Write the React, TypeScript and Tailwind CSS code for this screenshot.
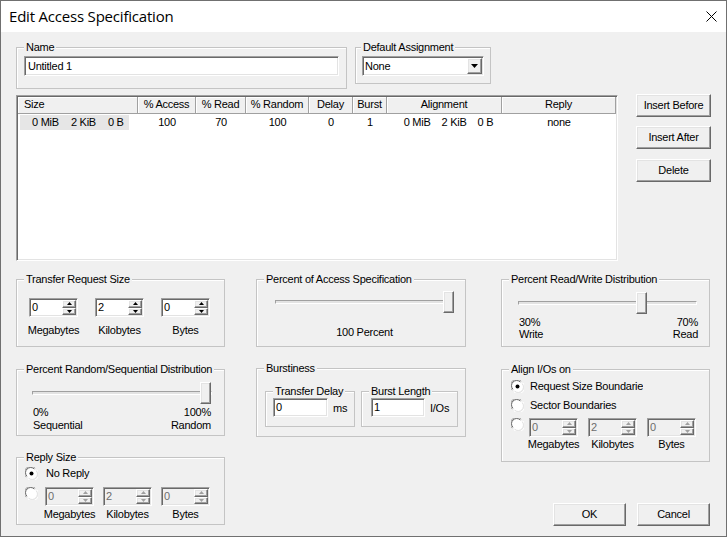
import React from "react";

const sunken =
  "border border-t-[#a0a0a0] border-l-[#a0a0a0] border-b-white border-r-white shadow-[inset_1px_1px_0_#696969,inset_-1px_-1px_0_#e3e3e3]";
const raised =
  "border border-t-white border-l-white border-b-[#696969] border-r-[#696969] shadow-[inset_-1px_-1px_0_#a0a0a0,inset_1px_1px_0_#e3e3e3] bg-[#f0f0f0]";

function Group({
  label,
  className = "",
  labelLeft = "left-[7px]",
  children,
}: {
  label: string;
  className?: string;
  labelLeft?: string;
  children?: React.ReactNode;
}) {
  return (
    <div className={`relative border border-[#c4c4c4] shadow-[inset_1px_1px_0_#fff] ${className}`}>
      <span className={`absolute -top-[7px] ${labelLeft} px-[2px] bg-[#f0f0f0] leading-[13px] whitespace-nowrap`}>
        {label}
      </span>
      {children}
    </div>
  );
}

function Arrow({ up, disabled }: { up?: boolean; disabled?: boolean }) {
  return (
    <div className={`flex-1 flex items-center justify-center ${raised}`}>
      <svg width="5" height="3" viewBox="0 0 5 3">
        <path d={up ? "M2.5 0 L5 3 L0 3 Z" : "M0 0 L5 0 L2.5 3 Z"} fill={disabled ? "#a0a0a0" : "#000"} />
      </svg>
    </div>
  );
}

function Spin({ value, disabled }: { value: string; disabled?: boolean }) {
  return (
    <div className={`flex h-[19px] w-[49px] ${sunken} ${disabled ? "bg-[#f0f0f0]" : "bg-white"}`}>
      <div className={`flex-1 pl-[2px] leading-[17px] ${disabled ? "text-[#6d6d6d]" : ""}`}>{value}</div>
      <div className="flex flex-col w-[16px] p-[1px]">
        <Arrow up disabled={disabled} />
        <Arrow disabled={disabled} />
      </div>
    </div>
  );
}

function LabeledSpin({ value, label, disabled, gap }: { value: string; label: string; disabled?: boolean; gap: string }) {
  return (
    <div className="flex flex-col items-center w-[49px]">
      <Spin value={value} disabled={disabled} />
      <span className={`${gap} leading-[13px] whitespace-nowrap`}>{label}</span>
    </div>
  );
}

function Radio({ checked }: { checked?: boolean }) {
  return (
    <svg width="13" height="13" viewBox="0 0 13 13" className="shrink-0">
      <circle cx="6.5" cy="6.5" r="5.5" fill="#fff" />
      <path d="M1.2 10.2 A6 6 0 0 1 10.2 1.2" stroke="#a0a0a0" strokeWidth="1" fill="none" />
      <path d="M2 9.3 A5 5 0 0 1 9.3 2" stroke="#696969" strokeWidth="1" fill="none" />
      <path d="M11.8 2.8 A6 6 0 0 1 2.8 11.8" stroke="#fff" strokeWidth="1" fill="none" />
      <path d="M11 3.7 A5 5 0 0 1 3.7 11" stroke="#e3e3e3" strokeWidth="1" fill="none" />
      {checked && <circle cx="6.5" cy="6.5" r="2" fill="#000" />}
    </svg>
  );
}

function Slider({ className, thumb }: { className: string; thumb: number }) {
  return (
    <div className={`relative h-[22px] ${className}`}>
      <div className="absolute left-0 right-0 top-[9px] h-[4px] border border-t-[#a0a0a0] border-l-[#a0a0a0] border-b-white border-r-white bg-[#e3e3e3]" />
      <div className={`absolute top-0 h-[22px] w-[11px] ${raised}`} style={{ left: thumb }} />
    </div>
  );
}

function Btn({ children, className = "" }: { children: React.ReactNode; className?: string }) {
  return (
    <div className={`w-[75px] h-[23px] flex items-center justify-center ${raised} ${className}`}>{children}</div>
  );
}

const cols = [
  { name: "Size", w: "w-[120px]", left: true },
  { name: "% Access", w: "w-[58px]" },
  { name: "% Read", w: "w-[50px]" },
  { name: "% Random", w: "w-[63px]" },
  { name: "Delay", w: "w-[44px]" },
  { name: "Burst", w: "w-[34px]" },
  { name: "Alignment", w: "w-[115px]" },
  { name: "Reply", w: "w-[114px]" },
];

export default function App() {
  return (
    <div className="w-[727px] h-[537px] bg-[#f0f0f0] border border-[#707070] flex flex-col overflow-hidden text-black text-[11px] tracking-[-0.25px] font-['Liberation_Sans',Arial,sans-serif]">
      {/* title bar */}
      <div className="h-[31px] shrink-0 bg-white flex items-center justify-between pl-[8px] pr-[9px]">
        <span className="text-[15px] tracking-[-0.2px] font-['Open_Sans',sans-serif]">Edit Access Specification</span>
        <svg width="11" height="11" viewBox="0 0 11 11">
          <path d="M0.5 0.5 L10.5 10.5 M10.5 0.5 L0.5 10.5" stroke="#000" strokeWidth="1" />
        </svg>
      </div>

      <div className="flex-1 pl-[15px]">
        {/* name row */}
        <div className="flex items-start mt-[15px]">
          <Group label="Name" className="w-[331px] h-[42px]">
            <div className="pl-[7px] pt-[8px]">
              <div className={`w-[315px] h-[20px] bg-white pl-[3px] leading-[18px] ${sunken}`}>Untitled 1</div>
            </div>
          </Group>
          <Group label="Default Assignment" labelLeft="left-[5px]" className="w-[136px] h-[37px] ml-[8px]">
            <div className="pl-[6px] pt-[8px]">
              <div className={`w-[122px] h-[20px] bg-white flex ${sunken}`}>
                <span className="flex-1 pl-[2px] leading-[18px]">None</span>
                <div className={`w-[15px] m-[1px] flex items-center justify-center ${raised}`}>
                  <svg width="7" height="4" viewBox="0 0 7 4">
                    <path d="M0 0 L7 0 L3.5 4 Z" fill="#000" />
                  </svg>
                </div>
              </div>
            </div>
          </Group>
        </div>

        {/* list row */}
        <div className="flex items-start mt-[6px]">
          <div className={`w-[602px] h-[166px] bg-white ${sunken} p-[1px]`}>
            <div className="flex h-[17px]">
              {cols.map((c) => (
                <div
                  key={c.name}
                  className={`${c.w} shrink-0 leading-[15px] bg-[#f0f0f0] border-r border-b border-[#a0a0a0] shadow-[inset_1px_1px_0_#fff] ${
                    c.left ? "pl-[6px]" : "text-center"
                  }`}
                >
                  {c.name}
                </div>
              ))}
            </div>
            <div className="flex h-[16px] leading-[15px] mt-[1px]">
              <div className="w-[120px] shrink-0 pl-[2px]">
                <div className="w-[109px] bg-[#e6e6e6] flex pl-[12px] gap-[12px]">
                  <span>0 MiB</span>
                  <span>2 KiB</span>
                  <span>0 B</span>
                </div>
              </div>
              <div className="w-[58px] shrink-0 text-center">100</div>
              <div className="w-[50px] shrink-0 text-center">70</div>
              <div className="w-[63px] shrink-0 text-center">100</div>
              <div className="w-[44px] shrink-0 text-center">0</div>
              <div className="w-[34px] shrink-0 text-center">1</div>
              <div className="w-[115px] shrink-0 flex justify-center gap-[11px] pl-[8px]">
                <span>0 MiB</span>
                <span>2 KiB</span>
                <span>0 B</span>
              </div>
              <div className="w-[114px] shrink-0 text-center">none</div>
            </div>
          </div>
          <div className="flex flex-col ml-[18px] -mt-[1px]">
            <Btn>Insert Before</Btn>
            <Btn className="mt-[9px]">Insert After</Btn>
            <Btn className="mt-[10px]">Delete</Btn>
          </div>
        </div>

        {/* lower groups */}
        <div className="flex items-start mt-[18px]">
          {/* left column */}
          <div className="flex flex-col w-[209px]">
            <Group label="Transfer Request Size" className="h-[68px]">
              <div className="flex gap-[17px] pl-[12px] pt-[18px]">
                <LabeledSpin value="0" label="Megabytes" gap="mt-[7px]" />
                <LabeledSpin value="2" label="Kilobytes" gap="mt-[7px]" />
                <LabeledSpin value="0" label="Bytes" gap="mt-[7px]" />
              </div>
            </Group>
            <Group label="Percent Random/Sequential Distribution" className="h-[67px] mt-[22px]">
              <div className="pl-[15px] pt-[12px] w-[195px]">
                <Slider className="w-[180px]" thumb={168} />
                <div className="flex justify-between mt-[2px] px-[1px] leading-[13px]">
                  <div>
                    0%
                    <br />
                    Sequential
                  </div>
                  <div className="text-right">
                    100%
                    <br />
                    Random
                  </div>
                </div>
              </div>
            </Group>
            <Group label="Reply Size" className="h-[68px] mt-[21px]">
              <div className="pl-[8px] pt-[9px]">
                <div className="flex items-center gap-[8px] h-[13px]">
                  <Radio checked />
                  <span>No Reply</span>
                </div>
                <div className="flex items-start mt-[7px]">
                  <Radio />
                  <div className="flex gap-[9px] ml-[7px]">
                    <LabeledSpin value="0" label="Megabytes" disabled gap="mt-[2px]" />
                    <LabeledSpin value="2" label="Kilobytes" disabled gap="mt-[2px]" />
                    <LabeledSpin value="0" label="Bytes" disabled gap="mt-[2px]" />
                  </div>
                </div>
              </div>
            </Group>
          </div>

          {/* middle column */}
          <div className="flex flex-col w-[210px] ml-[31px]">
            <Group label="Percent of Access Specification" className="h-[68px]">
              <div className="pl-[18px] pt-[11px] w-[197px]">
                <Slider className="w-[179px]" thumb={168} />
                <div className="text-center mt-[13px] leading-[13px]">100 Percent</div>
              </div>
            </Group>
            <Group label="Burstiness" className="h-[69px] mt-[21px]">
              <div className="flex gap-[6px] pl-[8px] pt-[22px]">
                <Group label="Transfer Delay" className="w-[90px] h-[36px]">
                  <div className="flex items-center pl-[7px] pt-[6px]">
                    <div className={`w-[55px] h-[19px] bg-white pl-[2px] leading-[17px] ${sunken}`}>0</div>
                    <span className="ml-[5px] pt-[2px]">ms</span>
                  </div>
                </Group>
                <Group label="Burst Length" className="w-[97px] h-[36px]">
                  <div className="flex items-center pl-[9px] pt-[6px]">
                    <div className={`w-[54px] h-[19px] bg-white pl-[2px] leading-[17px] ${sunken}`}>1</div>
                    <span className="ml-[5px] pt-[2px]">I/Os</span>
                  </div>
                </Group>
              </div>
            </Group>
          </div>

          {/* right column */}
          <div className="flex flex-col w-[209px] ml-[35px]">
            <Group label="Percent Read/Write Distribution" className="h-[68px]">
              <div className="pl-[16px] pt-[12px] w-[196px]">
                <Slider className="w-[179px]" thumb={118} />
                <div className="flex justify-between mt-[2px] pl-[1px] leading-[12px]">
                  <div>
                    30%
                    <br />
                    Write
                  </div>
                  <div className="text-right">
                    70%
                    <br />
                    Read
                  </div>
                </div>
              </div>
            </Group>
            <Group label="Align I/Os on" className="h-[93px] mt-[22px]">
              <div className="pl-[9px] pt-[10px]">
                <div className="flex items-center gap-[6px] h-[13px]">
                  <Radio checked />
                  <span className="w-[113px] overflow-hidden whitespace-nowrap">Request Size Boundaries</span>
                </div>
                <div className="flex items-center gap-[6px] h-[13px] mt-[6px]">
                  <Radio />
                  <span>Sector Boundaries</span>
                </div>
                <div className="flex items-start mt-[6px]">
                  <Radio />
                  <div className="flex gap-[10px] ml-[5px]">
                    <LabeledSpin value="0" label="Megabytes" disabled gap="mt-[1px]" />
                    <LabeledSpin value="2" label="Kilobytes" disabled gap="mt-[1px]" />
                    <LabeledSpin value="0" label="Bytes" disabled gap="mt-[1px]" />
                  </div>
                </div>
              </div>
            </Group>
            <div className="flex gap-[11px] ml-[52px] mt-[41px]">
              <Btn>OK</Btn>
              <Btn>Cancel</Btn>
            </div>
          </div>
        </div>
      </div>
    </div>
  );
}
